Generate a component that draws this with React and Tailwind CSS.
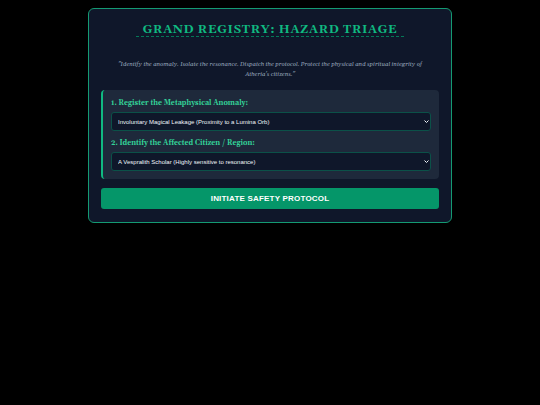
import { useState } from "react";

const serif = "font-[Georgia,Gelasio,'Liberation_Serif',serif]";
const sans = "font-['Liberation_Sans',Arial,sans-serif]";

const fields = [
  {
    id: "anomaly",
    label: "1. Register the Metaphysical Anomaly:",
    options: ["Involuntary Magical Leakage (Proximity to a Lumina Orb)"],
  },
  {
    id: "citizen",
    label: "2. Identify the Affected Citizen / Region:",
    options: ["A Vespralith Scholar (Highly sensitive to resonance)"],
  },
];

function Field({ id, label, options }) {
  const [value, setValue] = useState(options[0]);
  return (
    <div className="flex flex-col">
      <label htmlFor={id} className="text-[7px] leading-[10px] font-bold text-[#34d399]">
        {label}
      </label>
      <div className="relative mt-1">
        <select
          id={id}
          value={value}
          onChange={(e) => setValue(e.target.value)}
          className={`${sans} block h-[19px] w-full appearance-none rounded-[3px] border border-[#0b5148] bg-[#0f172a] px-[6px] text-[6px] leading-[10px] text-[#f1f5f9]`}
        >
          {options.map((o) => (
            <option key={o}>{o}</option>
          ))}
        </select>
        <svg
          viewBox="0 0 10 6"
          className="pointer-events-none absolute top-2 right-[2px] h-[3px] w-[5px]"
          fill="none"
          stroke="#f1f5f9"
          strokeWidth="2"
          aria-hidden="true"
        >
          <path d="M1 1l4 4 4-4" />
        </svg>
      </div>
    </div>
  );
}

export default function App() {
  return (
    <main className={`${serif} min-h-screen bg-black px-[88px] pt-2`}>
      <section className="rounded-md border border-[#149a72] bg-[#0f172a] px-3 pt-[14px] pb-[13px]">
        <header className="flex justify-center">
          <h1 className="border-b border-dashed border-[#047857] px-[7px] text-[12px] leading-[13px] font-bold tracking-wider text-[#10b981] uppercase">
            Grand Registry: Hazard Triage
          </h1>
        </header>
        <p className="mt-[22px] px-4 text-center text-[6px] leading-[10px] text-[#94a3b8] italic">
          "Identify the anomaly. Isolate the resonance. Dispatch the protocol. Protect the physical and spiritual integrity of Atheria's citizens."
        </p>
        <form onSubmit={(e) => e.preventDefault()}>
          <div className="mt-[11px] flex flex-col gap-[7px] rounded-sm border-l-2 border-[#10b981] bg-[#1e293b] p-2">
            {fields.map((f) => (
              <Field key={f.id} {...f} />
            ))}
          </div>
          <button
            type="submit"
            className={`${sans} mt-[9px] block h-[21px] w-full rounded-[3px] bg-[#059669] text-[8px] font-bold tracking-wide text-white uppercase`}
          >
            Initiate Safety Protocol
          </button>
        </form>
      </section>
    </main>
  );
}
